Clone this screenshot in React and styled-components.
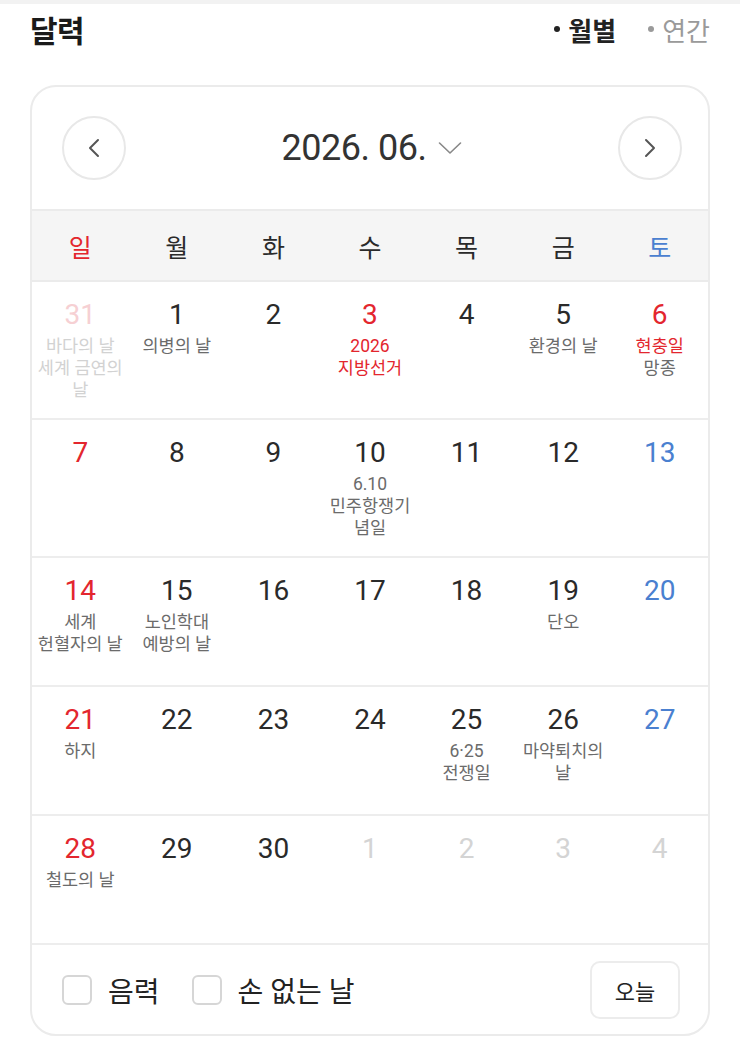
import styled, { createGlobalStyle } from "styled-components"

const GlobalStyle = createGlobalStyle`
  html, body {
    margin: 0;
    padding: 0;
    background: #fff;
  }
  body {
    font-family: Roboto, "Noto Sans CJK KR", "Noto Sans", sans-serif;
    color: #222;
  }
`

const RED = "#e3262e"
const BLUE = "#4a80d0"

// each cell: day number, tone, holiday lines
const weeks = [
  [
    { d: 31, tone: "fadedRed", lines: [["바다의 날"], ["세계 금연의"], ["날"]], faded: true },
    { d: 1, lines: [["의병의 날"]] },
    { d: 2 },
    { d: 3, tone: "red", lines: [["2026", "red"], ["지방선거", "red"]] },
    { d: 4 },
    { d: 5, lines: [["환경의 날"]] },
    { d: 6, tone: "red", lines: [["현충일", "red"], ["망종"]] },
  ],
  [
    { d: 7, tone: "red" },
    { d: 8 },
    { d: 9 },
    { d: 10, lines: [["6.10"], ["민주항쟁기"], ["념일"]] },
    { d: 11 },
    { d: 12 },
    { d: 13, tone: "blue" },
  ],
  [
    { d: 14, tone: "red", lines: [["세계"], ["헌혈자의 날"]] },
    { d: 15, lines: [["노인학대"], ["예방의 날"]] },
    { d: 16 },
    { d: 17 },
    { d: 18 },
    { d: 19, lines: [["단오"]] },
    { d: 20, tone: "blue" },
  ],
  [
    { d: 21, tone: "red", lines: [["하지"]] },
    { d: 22 },
    { d: 23 },
    { d: 24 },
    { d: 25, lines: [["6·25"], ["전쟁일"]] },
    { d: 26, lines: [["마약퇴치의"], ["날"]] },
    { d: 27, tone: "blue" },
  ],
  [
    { d: 28, tone: "red", lines: [["철도의 날"]] },
    { d: 29 },
    { d: 30 },
    { d: 1, tone: "muted" },
    { d: 2, tone: "muted" },
    { d: 3, tone: "muted" },
    { d: 4, tone: "muted" },
  ],
]

const weekdays = [
  ["일", "red"],
  ["월"],
  ["화"],
  ["수"],
  ["목"],
  ["금"],
  ["토", "blue"],
]

const toneColor = (tone) => {
  if (tone === "red") return RED
  if (tone === "blue") return BLUE
  if (tone === "fadedRed") return "#f6d0d3"
  if (tone === "muted") return "#d4d4d4"
  return "#2a2a2a"
}

function ChevronLeft() {
  return (
    <svg width="16" height="24" viewBox="0 0 16 24" fill="none">
      <path d="M12 4 L4 12 L12 20" stroke="#555" strokeWidth="2" strokeLinecap="round" strokeLinejoin="round" />
    </svg>
  )
}

function ChevronRight() {
  return (
    <svg width="16" height="24" viewBox="0 0 16 24" fill="none">
      <path d="M4 4 L12 12 L4 20" stroke="#555" strokeWidth="2" strokeLinecap="round" strokeLinejoin="round" />
    </svg>
  )
}

function ChevronDown() {
  return (
    <svg width="24" height="14" viewBox="0 0 24 14" fill="none">
      <path d="M1.5 2 L12 12 L22.5 2" stroke="#888" strokeWidth="1.6" strokeLinecap="round" strokeLinejoin="round" />
    </svg>
  )
}

function App() {
  return (
    <Page>
      <GlobalStyle />
      <Header>
        <Title>달력</Title>
        <Modes>
          <Mode $active>월별</Mode>
          <Mode>연간</Mode>
        </Modes>
      </Header>

      <Card>
        <Nav>
          <RoundButton aria-label="이전 달"><ChevronLeft /></RoundButton>
          <MonthTitle>
            2026. 06.
            <ChevronDown />
          </MonthTitle>
          <RoundButton aria-label="다음 달"><ChevronRight /></RoundButton>
        </Nav>

        <WeekHead>
          {weekdays.map(([label, tone]) => (
            <WeekLabel key={label} $color={toneColor(tone)}>{label}</WeekLabel>
          ))}
        </WeekHead>

        {weeks.map((week, i) => (
          <WeekRow key={i}>
            {week.map((cell, j) => (
              <Cell key={j}>
                <DayNum $color={toneColor(cell.tone)}>{cell.d}</DayNum>
                {cell.lines && (
                  <Events>
                    {cell.lines.map(([text, tone], k) => (
                      <EventLine
                        key={k}
                        $color={cell.faded ? "#d2d2d2" : tone === "red" ? RED : "#6b6b6b"}
                      >
                        {text}
                      </EventLine>
                    ))}
                  </Events>
                )}
              </Cell>
            ))}
          </WeekRow>
        ))}

        <Footer>
          <Option>
            <Box />
            음력
          </Option>
          <Option>
            <Box />
            손 없는 날
          </Option>
          <TodayButton>오늘</TodayButton>
        </Footer>
      </Card>
    </Page>
  )
}

const Page = styled.div`
  width: 740px;
  min-height: 1040px;
  box-sizing: border-box;
  border-top: 4px solid #f2f2f2;
  padding: 0 30px;
`

const Header = styled.div`
  height: 50px;
  margin-bottom: 31px;
  display: flex;
  align-items: center;
  justify-content: space-between;
`

const Title = styled.h1`
  margin: 0;
  font-size: 30px;
  font-weight: 700;
  color: #1a1a1a;
  letter-spacing: -0.5px;
`

const Modes = styled.div`
  display: flex;
  gap: 32px;
`

const Mode = styled.span`
  display: flex;
  align-items: center;
  gap: 8px;
  font-size: 26px;
  font-weight: ${(p) => (p.$active ? 700 : 400)};
  color: ${(p) => (p.$active ? "#222" : "#9a9a9a")};

  &::before {
    content: "";
    width: 6px;
    height: 6px;
    border-radius: 50%;
    background: ${(p) => (p.$active ? "#222" : "#9a9a9a")};
  }
`

const Card = styled.div`
  border: 2px solid #ebebeb;
  border-radius: 26px;
  overflow: hidden;
`

const Nav = styled.div`
  height: 122px;
  display: flex;
  align-items: center;
  justify-content: space-between;
  padding: 0 26px 0 30px;
`

const RoundButton = styled.button`
  width: 64px;
  height: 64px;
  border-radius: 50%;
  border: 2px solid #e8e8e8;
  background: #fff;
  display: flex;
  align-items: center;
  justify-content: center;
  padding: 0;
`

const MonthTitle = styled.div`
  display: flex;
  align-items: center;
  gap: 12px;
  font-size: 36px;
  color: #333;
  letter-spacing: -0.5px;
`

const WeekHead = styled.div`
  display: grid;
  grid-template-columns: repeat(7, 1fr);
  box-sizing: border-box;
  height: 73px;
  align-items: center;
  background: #f5f5f5;
  border-top: 2px solid #ebebeb;
  border-bottom: 2px solid #ebebeb;
`

const WeekLabel = styled.div`
  text-align: center;
  font-size: 25px;
  color: ${(p) => p.$color};
`

const WeekRow = styled.div`
  display: grid;
  grid-template-columns: repeat(7, 1fr);
  min-height: 127px;
  border-bottom: 2px solid #ededed;
`

const Cell = styled.div`
  display: flex;
  flex-direction: column;
  align-items: center;
  padding: 18px 0 17px;
`

const DayNum = styled.div`
  font-size: 28px;
  line-height: 30px;
  color: ${(p) => p.$color};
`

const Events = styled.div`
  margin-top: 5px;
  display: flex;
  flex-direction: column;
  align-items: center;
`

const EventLine = styled.div`
  font-size: 17.5px;
  line-height: 22px;
  color: ${(p) => p.$color};
  white-space: nowrap;
`

const Footer = styled.div`
  height: 89px;
  display: flex;
  align-items: center;
  padding: 0 28px 0 30px;
  gap: 32px;
`

const Option = styled.label`
  display: flex;
  align-items: center;
  gap: 16px;
  font-size: 28px;
  color: #222;
`

const Box = styled.span`
  width: 30px;
  height: 30px;
  border: 2px solid #d6d6d6;
  border-radius: 6px;
  box-sizing: border-box;
`

const TodayButton = styled.button`
  margin-left: auto;
  width: 90px;
  height: 58px;
  border: 2px solid #ececec;
  border-radius: 10px;
  background: #fff;
  font-family: inherit;
  font-size: 22px;
  color: #222;
`

export default App
